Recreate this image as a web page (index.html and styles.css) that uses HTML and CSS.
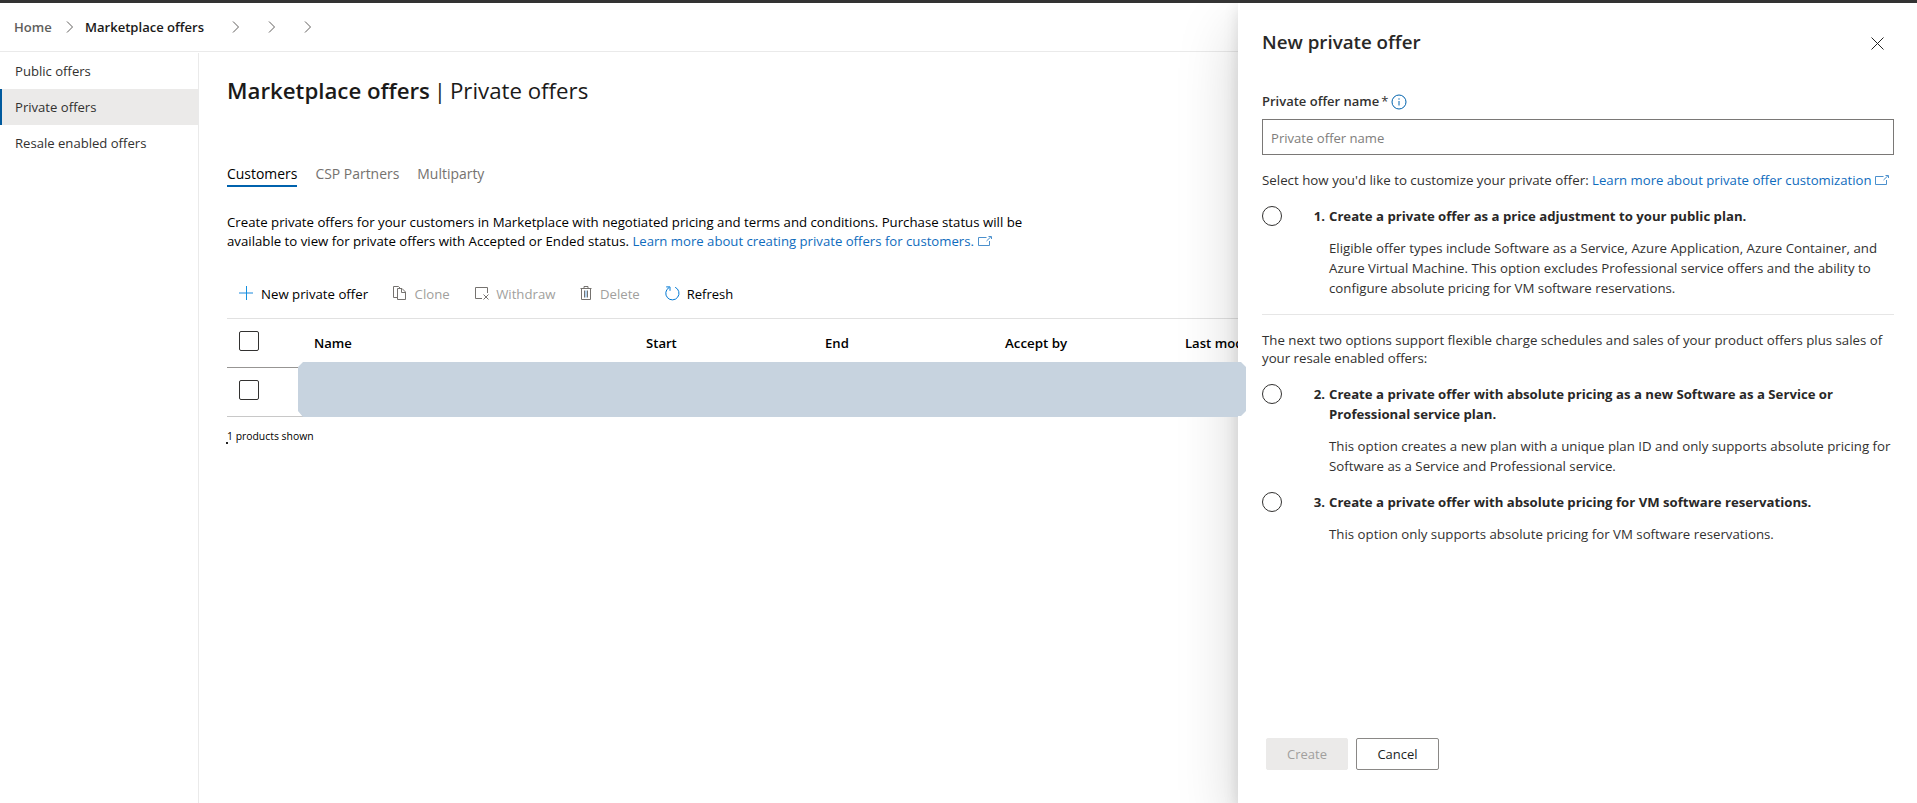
FILE: index.html
```html
<!DOCTYPE html>
<html lang="en">
<head>
<meta charset="utf-8">
<title>Marketplace offers</title>
<link rel="stylesheet" href="styles.css">
</head>
<body>
<div class="app">
  <div class="topbar"></div>
  <div class="stage">
    <nav class="breadcrumb">
      <a class="crumb">Home</a>
      <svg class="chev first" width="8" height="12" viewBox="0 0 8 12"><path d="M1 .5 6.5 6 1 11.5"/></svg>
      <a class="crumb current">Marketplace offers</a>
      <svg class="chev" width="8" height="12" viewBox="0 0 8 12"><path d="M1 .5 6.5 6 1 11.5"/></svg>
      <svg class="chev" width="8" height="12" viewBox="0 0 8 12"><path d="M1 .5 6.5 6 1 11.5"/></svg>
      <svg class="chev" width="8" height="12" viewBox="0 0 8 12"><path d="M1 .5 6.5 6 1 11.5"/></svg>
    </nav>
    <div class="body">
      <aside class="sidebar">
        <a class="nav-item">Public offers</a>
        <a class="nav-item selected">Private offers</a>
        <a class="nav-item">Resale enabled offers</a>
      </aside>
      <main class="main">
        <h1 class="title"><b>Marketplace offers</b><span class="bar">|</span><span>Private offers</span></h1>
        <div class="tabs">
          <a class="tab active">Customers</a>
          <a class="tab">CSP Partners</a>
          <a class="tab">Multiparty</a>
        </div>
        <p class="intro">Create private offers for your customers in Marketplace with negotiated pricing and terms and conditions. Purchase status will be<br>available to view for private offers with Accepted or Ended status. <a class="link">Learn more about creating private offers for customers.<svg class="ext" width="14" height="10" viewBox="0 0 14 10"><path d="M8.500 1.500H.5v8h11V5M8.500 5 13 .7M10.500 .5h3v2.500"/></svg></a></p>
        <div class="toolbar">
          <span class="tool"><svg width="14" height="14" viewBox="0 0 14 14"><path class="plus-h" d="M0 7h14"/><path class="plus-v" d="M7.5 0v14"/></svg>New private offer</span>
          <span class="tool disabled"><svg width="14" height="14" viewBox="0 0 14 14"><path d="M4.500 11.500h-4V.5h5l3 3M4.500 2.500h4.500l3.500 3.500v7.500h-8zM8.500 2.500v4h4"/></svg>Clone</span>
          <span class="tool disabled"><svg width="14" height="14" viewBox="0 0 14 14"><path d="M7 12.500H.5v-11h12V7M8.500 8.500l5 5M13.500 8.500l-5 5"/></svg>Withdraw</span>
          <span class="tool disabled"><svg class="trash" width="12" height="14" viewBox="0 0 12 14"><path class="fill" d="M6 4.500v7"/><path d="M.5 2.500h11M4 2.500V.5h4v2M1.500 2.500v11h9v-11M4.500 4.500v7M7.500 4.500v7"/></svg>Delete</span>
          <span class="tool refresh"><svg width="15" height="15" viewBox="0 0 15 15"><path d="M10.200 1.300A6.600 6.600 0 1 1 4 1.600M1.200 .9H5V4.800"/></svg>Refresh</span>
        </div>
        <div class="table">
          <div class="row head">
            <span class="cell"><i class="check"></i></span>
            <span class="cell">Name</span><span class="cell">Start</span><span class="cell">End</span><span class="cell accept">Accept by</span><span class="cell">Last modified</span>
          </div>
          <div class="row">
            <span class="cell"><i class="check"></i></span>
          </div>
        </div>
        <div class="count">1 products shown<i class="speck"></i></div>
      </main>
    </div>
    <section class="panel">
      <header class="panel-head">
        <h2 class="panel-title">New private offer</h2>
        <svg class="close" width="13" height="13" viewBox="0 0 13 13"><path d="M.5.5l12 12M12.500.5l-12 12"/></svg>
      </header>
      <div class="label"><b>Private offer name</b><span class="star">*</span><svg width="16" height="16" viewBox="0 0 16 16"><circle cx="8" cy="8" r="7"/><path d="M8 7v4.500M8 4.300v1.400"/></svg></div>
      <input class="field" placeholder="Private offer name">
      <p class="choose">Select how you'd like to customize your private offer: <a class="link">Learn more about private offer customization<svg class="ext" width="14" height="10" viewBox="0 0 14 10"><path d="M8.500 1.500H.5v8h11V5M8.500 5 13 .7M10.500 .5h3v2.500"/></svg></a></p>
      <div class="option">
        <i class="radio"></i><b class="num">1.</b>
        <div><b>Create a private offer as a price adjustment to your public plan.</b>
          <p class="desc">Eligible offer types include Software as a Service, Azure Application, Azure Container, and<br>Azure Virtual Machine. This option excludes Professional service offers and the ability to<br>configure absolute pricing for VM software reservations.</p></div>
      </div>
      <hr class="rule">
      <p class="next">The next two options support flexible charge schedules and sales of your product offers plus sales of<br>your resale enabled offers:</p>
      <div class="option">
        <i class="radio"></i><b class="num">2.</b>
        <div><b>Create a private offer with absolute pricing as a new Software as a Service or<br>Professional service plan.</b>
          <p class="desc">This option creates a new plan with a unique plan ID and only supports absolute pricing for<br>Software as a Service and Professional service.</p></div>
      </div>
      <div class="option">
        <i class="radio"></i><b class="num">3.</b>
        <div><b>Create a private offer with absolute pricing for VM software reservations.</b>
          <p class="desc">This option only supports absolute pricing for VM software reservations.</p></div>
      </div>
      <footer class="actions">
        <button class="btn primary" disabled>Create</button>
        <button class="btn">Cancel</button>
      </footer>
    </section>
    <div class="mask"></div>
  </div>
</div>
</body>
</html>
```
FILE: styles.css
```css
* { box-sizing: border-box; }
body {
  margin: 0;
  font: 13.22px/20px "Open Sans", "Noto Sans", sans-serif;
  color: #000;
  background: #fff;
}
h1, h2, p { margin: 0; font-weight: 400; }
svg { fill: none; stroke: currentColor; flex: none; }
.app { height: 803px; display: flex; flex-direction: column; overflow: hidden; white-space: nowrap; }
.topbar { height: 3px; background: #333; flex: none; }
.stage { flex: 1; position: relative; overflow: hidden; display: flex; flex-direction: column; }

.breadcrumb {
  height: 49px;
  flex: none;
  display: flex;
  align-items: center;
  padding: 0 0 0 14px;
  border-bottom: 1px solid #eaeaea;
  font-size: 13.05px;
  font-weight: 600;
}
.crumb { color: #605e5c; width: 52px; }
.crumb.current { color: #1b1a19; width: 147px; }
.chev { stroke: #605e5c; margin-right: 28px; }
.chev.first { margin-right: 11px; }

.body { flex: 1; display: flex; padding-top: 1px; }
.sidebar { width: 199px; flex: none; border-right: 1px solid #eaeaea; }
.nav-item {
  display: block;
  height: 36px;
  line-height: 36px;
  padding-left: 15px;
  font-size: 13.1px;
  color: #323130;
}
.nav-item.selected { background: #ebeae9; border-left: 2px solid #005a9e; padding-left: 13px; }

.main { flex: 1; padding: 22px 0 0 28px; min-width: 0; }
.title { display: flex; font-size: 22.25px; line-height: 32px; color: #1b1a19; }
.title b { font-weight: 600; }
.title .bar { width: 20px; text-align: center; }
.tabs { display: flex; gap: 18px; margin-top: 56px; font-size: 13.95px; line-height: 22px; color: #75726f; }
.tab { height: 24px; }
.tab.active { color: #000; border-bottom: 2px solid #0062ad; }
.intro { margin-top: 26px; line-height: 19px; }
.link { color: #0f6cbd; font-size: 13.17px; }
.ext { margin-left: 4px; vertical-align: 0; opacity: .75; }

.toolbar { display: flex; gap: 25px; height: 48px; margin-top: 19px; padding-left: 12px; align-items: center; }
.tool { display: flex; align-items: center; gap: 8px; }
.tool svg { position: relative; top: -1px; color: #75726f; }
.tool.disabled { color: #a19f9d; font-size: 13.2px; gap: 7.5px; }
.plus-h { stroke: #8cc4ee; stroke-width: 2; }
.plus-v { stroke: #1490df; }
.trash .fill { stroke: #b5d3ee; stroke-width: 2; }
.tool.refresh { font-size: 13px; gap: 7px; }
.tool.refresh svg { color: #0078d4; }

.table { border-top: 1px solid #e1e1e1; }
.row {
  display: grid;
  grid-template-columns: 87px 332px 179px 180px 180px 1fr;
  height: 49px;
  align-items: center;
  border-bottom: 1px solid #c8c8c8;
}
.row.head { border-bottom-color: #979593; font-weight: 600; font-size: 13.1px; }
.accept { font-size: 13.35px; }
.check {
  display: block;
  width: 20px;
  height: 20px;
  margin: -4px 0 0 12px;
  border: 1px solid #323130;
  border-radius: 2px;
}
.count { position: relative; margin-top: 9px; font-size: 10.4px; line-height: 20px; }
.speck { position: absolute; left: -1px; top: 16px; width: 2px; height: 2px; background: #222; }

.mask {
  position: absolute;
  left: 298px;
  top: 359px;
  width: 948px;
  height: 55px;
  background: #c7d3df;
  clip-path: polygon(5px 0, 943px 0, 948px 5px, 948px 49px, 943px 54px, 940px 54px, 940px 55px, 5px 55px, 0 49px, 0 5px);
}

.panel {
  position: absolute;
  top: 0;
  right: 0;
  width: 679px;
  height: 800px;
  padding: 0 23px 0 24px;
  background: #fff;
  color: #323130;
  font-size: 13.25px;
  box-shadow: 0 25.6px 57.6px rgba(0, 0, 0, .18), 0 4.8px 14.4px rgba(0, 0, 0, .12);
  display: flex;
  flex-direction: column;
}
.panel-head { display: flex; justify-content: space-between; align-items: center; height: 32px; margin-top: 23px; padding-right: 10px; }
.panel-title { font-size: 18.75px; line-height: 32px; font-weight: 600; color: #292827; }
.close { margin-top: 2px; stroke: #222; }
.label { display: flex; height: 20px; margin-top: 33px; font-size: 13px; }
.label b { font-weight: 600; }
.label .star { margin-left: 2px; width: 10px; }
.label svg { color: #0062ad; margin-top: 3px; }
.field {
  height: 36px;
  flex: none;
  margin: 8px 0 0;
  padding: 2px 8px 0;
  border: 1px solid #7a7876;
  border-radius: 0;
  font: 13.1px "Open Sans", "Noto Sans", sans-serif;
}
.field::placeholder { color: #807e7c; opacity: 1; }
.choose { margin-top: 15px; font-size: 13.32px; }
.choose .link { font-size: 13.17px; }
.choose .ext { margin-left: 3px; }
.option { display: grid; grid-template-columns: 47px 20px 1fr; margin-top: 16px; }
.option b { color: #292827; font-weight: 700; font-size: 13.18px; }
.option .num { text-align: right; padding-right: 4px; }
.radio { width: 20px; height: 20px; border: 1px solid #323130; border-radius: 50%; }
.desc { margin-top: 12px; font-size: 13.28px; }
.rule { width: 100%; height: 1px; border: 0; margin: 16px 0 0; background: #e6e6e6; flex: none; }
.next { margin-top: 16px; line-height: 18px; }
.next + .option { margin-top: 17px; }
.actions { display: flex; gap: 8px; margin: auto 0 33px 4px; }
.btn {
  width: 83px;
  height: 32px;
  padding: 0;
  border: 1px solid #8a8886;
  border-radius: 2px;
  background: #fff;
  color: #201f1e;
  font: 13px "Open Sans", "Noto Sans", sans-serif;
}
.btn.primary { width: 82px; background: #ebeae9; border-color: #ebeae9; color: #a19f9d; }
```
